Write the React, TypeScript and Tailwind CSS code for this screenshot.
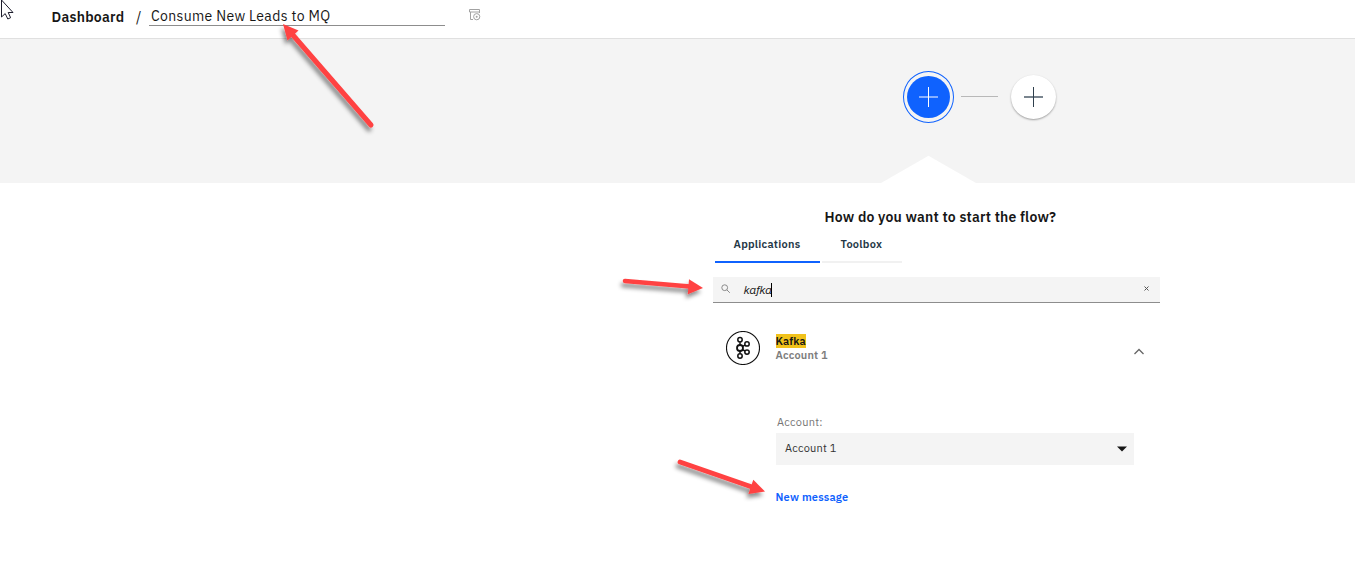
import React from "react";

function PlusIcon({ className, horizontal }: { className: string; horizontal: string }) {
  return (
    <svg viewBox="0 0 19 20" width="19" height="20" className={className} fill="none" shapeRendering="crispEdges">
      <path d="M0 10H19" stroke={horizontal} strokeWidth="2" />
      <path d="M9.5 0V20" stroke="currentColor" strokeWidth="1" />
    </svg>
  );
}

function KafkaLogo() {
  return (
    <svg width="34" height="34" viewBox="0 0 34 34" fill="none" stroke="#111" className="shrink-0">
      <circle cx="17" cy="17" r="16.5" strokeWidth="1.1" />
      <g strokeWidth="1.5">
        <path d="M14 11.2V14M14 20V22.5M16.6 15.4L19 14.1M16.6 18.6L19 20" />
        <circle cx="14" cy="8.8" r="2.2" />
        <circle cx="14" cy="17" r="3" strokeWidth="1.8" />
        <circle cx="14" cy="25" r="2.2" />
        <circle cx="21" cy="12.9" r="2.2" />
        <circle cx="21" cy="21.1" r="2.2" />
      </g>
    </svg>
  );
}

function Annotations() {
  return (
    <svg
      className="pointer-events-none absolute left-0 top-0"
      width="1355"
      height="582"
      viewBox="0 0 1355 582"
    >
      <defs>
        <filter id="shade" x="-20%" y="-60%" width="140%" height="260%">
          <feDropShadow dx="-2" dy="4" stdDeviation="2" floodColor="#000" floodOpacity="0.45" />
        </filter>
      </defs>
      <g filter="url(#shade)" stroke="#ff4242" fill="#ff4242" strokeLinecap="round">
        <path d="M371 125L292 34" strokeWidth="5" />
        <path d="M283 24L298.5 30.5L287.5 40.5Z" stroke="none" />
      </g>
      <g filter="url(#shade)" stroke="#ff4242" fill="#ff4242" strokeLinecap="round">
        <path d="M625 281L690 286.5" strokeWidth="4.6" />
        <path d="M703 288L689 279.3L687.8 294.3Z" stroke="none" />
      </g>
      <g filter="url(#shade)" stroke="#ff4242" fill="#ff4242" strokeLinecap="round">
        <path d="M680 462L752 487" strokeWidth="4.8" />
        <path d="M765 491.5L753.3 479.8L748.4 494Z" stroke="none" />
      </g>
      <path
        d="M1.5 0V17L5.2 13.6L7.8 19L10.6 17.7L8.2 12.5H13Z"
        fill="#fff"
        stroke="#1c1c2c"
        strokeWidth="1"
      />
    </svg>
  );
}

function Header() {
  return (
    <header className="flex h-[39px] items-start border-b border-[#e0e0e0] bg-white pl-[52px] text-[14px] leading-[18px] text-[#161616]">
      <span className="-ml-[0.5px] mt-[8px] w-[84.5px] font-semibold tracking-[0.24px]">Dashboard</span>
      <span className="mt-[8px] w-[13px]">/</span>
      <div className="h-[26px] w-[296px] border-b border-[#8d8d8d] pl-[2px] pt-[7px] tracking-[0.34px]">
        Consume New Leads to MQ
      </div>
      <svg className="ml-[24px] mt-[9px]" width="12" height="12" viewBox="0 0 12 12" fill="none" stroke="#a2a2a2">
        <path d="M10.5 4V.5H.5V3H10.5M1.5 3V10.5H4" />
        <circle cx="7.7" cy="7.7" r="3.1" />
        <circle cx="7.7" cy="7.7" r="1" fill="#a2a2a2" stroke="none" />
      </svg>
    </header>
  );
}

function FlowBand() {
  return (
    <section className="flex h-[144px] flex-col justify-between bg-[#f4f4f4]">
      <div className="flex items-center pl-[903px] pt-[32px]">
        <div className="flex h-[52px] w-[51px] items-center justify-center rounded-[50%] border border-[#0f62fe]">
          <div className="flex h-[42px] w-[43px] items-center justify-center rounded-[50%] bg-[#0f62fe]">
            <PlusIcon className="text-white" horizontal="#87b0ff" />
          </div>
        </div>
        <div className="mb-px ml-[7px] mr-[13px] h-px w-[37px] bg-[#b8b8b8]" />
        <div className="flex h-[44px] w-[45px] items-center justify-center rounded-[50%] bg-white shadow-[0_1px_2px_rgba(0,0,0,0.35)]">
          <PlusIcon className="text-[#2f3f4d]" horizontal="#7a858f" />
        </div>
      </div>
      <svg className="ml-[881px]" width="95" height="28" viewBox="0 0 95 28">
        <path d="M0 28L47.5 0.8L95 28Z" fill="#fff" />
      </svg>
    </section>
  );
}

function SourcePanel() {
  return (
    <main className="ml-[713px] flex w-[447px] flex-col text-[11px] text-[#161616]">
      <h1 className="mt-[25px] pl-[111.5px] text-[14px] font-semibold leading-[18px] tracking-[0.2px] whitespace-nowrap">
        How do you want to start the flow?
      </h1>
      <nav className="flex h-[37px] gap-[2px] pl-[2px] font-semibold text-[#243746]">
        <div className="w-[105px] border-b-2 border-[#0f62fe] pl-[18.5px] pt-[10px] leading-[16px] tracking-[0.25px]">
          Applications
        </div>
        <div className="w-[80px] border-b-2 border-[#f1f1f1] pl-[18.5px] pt-[10px] leading-[16px] tracking-[0.25px]">
          Toolbox
        </div>
      </nav>
      <div className="mt-[14px] flex h-[26px] border-b border-[#8d8d8d] bg-[#f4f4f4]">
        <svg className="ml-[8px] mt-[7px]" width="10" height="10" viewBox="0 0 10 10" fill="none" stroke="#8a8a8a">
          <circle cx="3.7" cy="3.7" r="2.9" />
          <path d="M5.8 5.8L8.8 8.8" />
        </svg>
        <span className="ml-[12.5px] mt-[5px] w-[27.5px] text-[12px] italic leading-[16px] tracking-[-0.3px]">kafka</span>
        <span className="mt-[6px] h-[14px] w-px bg-black" />
        <svg className="ml-auto mr-[11px] mt-[9px]" width="5" height="5" viewBox="0 0 5 5" stroke="#555" fill="none">
          <path d="M.5 .5L4.5 4.5M4.5 .5L.5 4.5" />
        </svg>
      </div>
      <div className="mt-[28px] flex pl-[13px]">
        <KafkaLogo />
        <div className="ml-[15.5px] mt-[3px] flex flex-col items-start font-semibold leading-[14px]">
          <span className="bg-[#f1c21b] tracking-[0.1px]">Kafka</span>
          <span className="tracking-[0.15px] text-[#7d7d7d]">Account 1</span>
        </div>
        <svg className="ml-auto mr-[16px] mt-[17px]" width="10" height="7" viewBox="0 0 10 7" fill="none" stroke="#666" strokeWidth="1.3">
          <path d="M.5 6L5 1.5L9.5 6" />
        </svg>
      </div>
      <div className="ml-[63px] mt-[49px] flex w-[358px] flex-col items-stretch">
        <span className="pl-px leading-[16px] tracking-[0.25px] text-[#767676]">Account:</span>
        <div className="mt-[3px] flex h-[32px] items-center bg-[#f4f4f4] pl-[9px] pr-[7px]">
          <span className="mb-[2px] leading-[16px] tracking-[0.22px] text-[#333]">Account 1</span>
          <svg className="ml-auto" width="10" height="6" viewBox="0 0 10 6">
            <path d="M0 .5H10L5 5.5Z" fill="#161616" />
          </svg>
        </div>
        <a className="-ml-[0.5px] mt-[24px] font-semibold leading-[16px] tracking-[0.2px] text-[#0f62fe]">New message</a>
      </div>
    </main>
  );
}

export default function App() {
  return (
    <div className="relative h-[582px] w-[1355px] overflow-hidden bg-white font-['IBM_Plex_Sans','Roboto',sans-serif]">
      <Header />
      <FlowBand />
      <SourcePanel />
      <Annotations />
    </div>
  );
}
